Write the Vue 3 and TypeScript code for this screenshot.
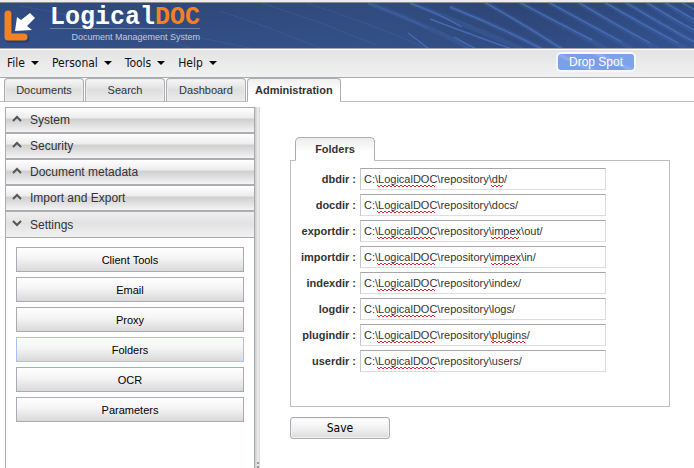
<script setup lang="ts">
import { reactive, ref } from 'vue'

interface SquiggleSpan {
  start: number
  width: number
}

interface FolderField {
  name: string
  path: string
  marks: SquiggleSpan[]
}

const menus: string[] = ['File', 'Personal', 'Tools', 'Help']
const tabs: string[] = ['Documents', 'Search', 'Dashboard', 'Administration']
const activeTab = ref('Administration')

const sections: string[] = ['System', 'Security', 'Document metadata', 'Import and Export', 'Settings']
const openSection = ref('Settings')

const settings: string[] = ['Client Tools', 'Email', 'Proxy', 'Folders', 'OCR', 'Parameters']
const activeSetting = ref('Folders')

const product: SquiggleSpan = { start: 17, width: 58 }

const fields = reactive<FolderField[]>([
  { name: 'dbdir', path: 'C:\\LogicalDOC\\repository\\db/', marks: [product, { start: 131, width: 12 }] },
  { name: 'docdir', path: 'C:\\LogicalDOC\\repository\\docs/', marks: [product] },
  { name: 'exportdir', path: 'C:\\LogicalDOC\\repository\\impex\\out/', marks: [product, { start: 131, width: 28 }] },
  { name: 'importdir', path: 'C:\\LogicalDOC\\repository\\impex\\in/', marks: [product, { start: 131, width: 28 }] },
  { name: 'indexdir', path: 'C:\\LogicalDOC\\repository\\index/', marks: [product] },
  { name: 'logdir', path: 'C:\\LogicalDOC\\repository\\logs/', marks: [product] },
  { name: 'plugindir', path: 'C:\\LogicalDOC\\repository\\plugins/', marks: [product, { start: 131, width: 34 }] },
  { name: 'userdir', path: 'C:\\LogicalDOC\\repository\\users/', marks: [product] },
])

// Zigzag under a misspelled word
function squiggle(mark: SquiggleSpan): string {
  let d = `M${mark.start} 1`
  for (let x = 2, low = true; x <= mark.width; x += 2, low = !low) {
    d += `L${mark.start + x} ${low ? 3 : 1}`
  }
  return d
}
</script>

<template>
  <div class="page">
    <header class="banner">
      <svg class="rays" viewBox="0 0 694 45" preserveAspectRatio="xMaxYMin slice" aria-hidden="true">
        <defs>
          <linearGradient id="sky" x1="0" y1="0" x2="1" y2="0">
            <stop offset="0" stop-color="#2f4a80" />
            <stop offset="0.25" stop-color="#2f4878" />
            <stop offset="0.55" stop-color="#304b7c" />
            <stop offset="0.75" stop-color="#2d4474" />
            <stop offset="1" stop-color="#2f4c86" />
          </linearGradient>
          <linearGradient id="glow" x1="0" y1="0" x2="0" y2="1">
            <stop offset="0" stop-color="#3b5fa6" stop-opacity="0" />
            <stop offset="1" stop-color="#3b5fa6" stop-opacity="0.3" />
          </linearGradient>
        </defs>
        <rect width="694" height="45" fill="url(#sky)" />
        <rect width="694" height="45" fill="url(#glow)" />
        <g fill="none" stroke="#4a72bd">
          <g stroke-width="1" opacity="0.3">
            <path d="M20 3Q120 20 190 45M100 18Q180 30 250 45M220 8Q270 24 320 45M262 0Q320 18 376 42M306 0Q370 20 426 45" />
          </g>
          <g stroke-width="5" opacity="0.22">
            <path d="M368 0Q424 21 470 45M410 0Q462 20 522 46M450 4Q500 24 542 46M484 -1Q522 20 562 46M519 -1Q560 21 606 46M548 -1Q590 22 632 46M578 -1Q616 22 658 46M604 -1Q642 21 686 46M625 -1Q666 24 706 46M646 -1Q676 20 706 34M664 -1L700 22" />
          </g>
          <g stroke-width="1.4" opacity="0.8">
            <path d="M368 0Q390 8 428 25" opacity="0.5" />
            <path d="M410 0Q440 11 462 24M408 30L428 45M450 4Q500 24 542 46M430 16Q480 35 512 46M454 34L476 46M484 -1Q522 20 562 46M519 -1Q560 21 592 37M548 -1Q590 22 622 39M578 -1Q616 22 650 40M604 -1Q642 21 678 40M625 -1Q666 24 700 42M646 -1Q676 18 700 30M664 -1L700 20M681 -1L700 10" />
          </g>
        </g>
      </svg>
      <svg class="mark" viewBox="0 0 34 34" aria-hidden="true">
        <path d="M4 5V28H21" transform="translate(1 1)" fill="none" stroke="#1f2f52" stroke-width="7" stroke-linecap="round" stroke-linejoin="round" opacity="0.5" />
        <path d="M4 4V27H20" fill="none" stroke="#f58220" stroke-width="7" stroke-linecap="round" stroke-linejoin="round" />
        <path d="M13 7L17 10L26 3L31 8L23 16L28 20L11 21Z" fill="#fff" />
      </svg>
      <div class="brand">
        <div class="name">Logical<span>DOC</span></div>
        <div class="slogan">Document Management System</div>
      </div>
    </header>

    <nav class="menubar">
      <button v-for="m in menus" :key="m" type="button" class="menu">
        {{ m }}
        <svg viewBox="0 0 8 4" aria-hidden="true"><path d="M0 0H8L4 4Z" /></svg>
      </button>
      <button type="button" class="drop">Drop Spot</button>
    </nav>

    <nav class="tabs">
      <button
        v-for="t in tabs"
        :key="t"
        type="button"
        class="tab"
        :class="{ active: t === activeTab }"
        @click="activeTab = t"
      >{{ t }}</button>
    </nav>

    <div class="workspace">
      <aside class="sidebar">
        <button
          v-for="s in sections"
          :key="s"
          type="button"
          class="section"
          :class="{ open: s === openSection }"
          @click="openSection = s"
        >
          <svg viewBox="0 0 10 7" aria-hidden="true">
            <path :d="s === openSection ? 'M1 1L5 5L9 1' : 'M1 6L5 2L9 6'" />
          </svg>
          {{ s }}
        </button>
        <div class="choices">
          <button
            v-for="c in settings"
            :key="c"
            type="button"
            class="choice"
            :class="{ active: c === activeSetting }"
            @click="activeSetting = c"
          >{{ c }}</button>
        </div>
      </aside>
      <div class="splitter"><i></i><i></i></div>

      <main class="content">
        <button type="button" class="panel-tab">Folders</button>
        <form id="folders" class="panel" @submit.prevent>
          <div v-for="f in fields" :key="f.name" class="row">
            <label :for="f.name">{{ f.name }} :</label>
            <div class="box">
              <input :id="f.name" v-model="f.path" type="text" spellcheck="false" />
              <svg class="wave" aria-hidden="true">
                <path v-for="(k, i) in f.marks" :key="i" :d="squiggle(k)" />
              </svg>
            </div>
          </div>
        </form>
        <button type="submit" form="folders" class="save">Save</button>
      </main>
    </div>
  </div>
</template>

<style>
body {
  margin: 0;
  background: #fff;
}
</style>

<style scoped>
.page {
  display: flex;
  flex-direction: column;
  height: 100vh;
  overflow: hidden;
  box-sizing: border-box;
  border-top: 2px solid #ececec;
  font-family: "Liberation Sans", Arial, sans-serif;
  font-size: 11px;
  color: #333;
}
button {
  margin: 0;
  padding: 0;
  box-sizing: border-box;
  font: inherit;
  color: inherit;
}
.banner {
  position: relative;
  flex: none;
  display: flex;
  height: 45px;
  background: #2f4a7d;
  border-top: 1px solid #8d8d8d;
  border-bottom: 1px solid #a3a5ac;
}
.rays {
  position: absolute;
  inset: 0;
  width: 100%;
  height: 100%;
}
.mark {
  position: relative;
  width: 34px;
  height: 34px;
  margin: 7px 0 0 4px;
}
.brand {
  position: relative;
  margin: 5px 0 0 12px;
  text-align: right;
}
.name {
  font: bold 25px/20px "Liberation Mono", monospace;
  color: #fff;
  border-bottom: 1px solid #6e7f9f;
}
.name span {
  color: #f58220;
}
.slogan {
  font-size: 9px;
  line-height: 16px;
  color: #c3cbdc;
}
.menubar {
  flex: none;
  display: flex;
  align-items: flex-start;
  height: 27px;
  padding-left: 7px;
  background: linear-gradient(#e3e3e3, #f1f1f1);
  border-top: 1px solid #fff;
  border-bottom: 1px solid #a7abb4;
}
.menu {
  display: flex;
  align-items: center;
  gap: 6px;
  height: 26px;
  margin-right: 13px;
  border: 0;
  background: none;
  color: #111;
  font: 12px "DejaVu Sans Condensed", Tahoma, sans-serif;
}
.menu svg {
  width: 8px;
  height: 4px;
}
.drop {
  width: 80px;
  height: 20px;
  margin: 2px 58px 0 auto;
  border: 2px solid #f5f8ff;
  border-radius: 5px;
  background: linear-gradient(25deg, #7aa0e6 0 25%, #8fb0ef 30%, #7b9fe6 38% 60%, #91b2f0 66%, #7ca2e8 74%);
  color: #fff;
  font-size: 12px;
  line-height: 16px;
}
.tabs {
  flex: none;
  display: flex;
  gap: 1px;
  height: 24px;
  padding-left: 4px;
  box-sizing: border-box;
  box-shadow: inset 0 -1px #bcbec2;
}
.tab {
  width: 80px;
  height: 24px;
  border: 1px solid #aaacb0;
  border-bottom-color: #bcbec2;
  border-radius: 4px 4px 0 0;
  background: linear-gradient(#f8f8f8, #dedede 50%, #ececec);
  box-shadow: inset 0 0 0 1px #eee;
}
.tab.active {
  width: auto;
  padding: 0 7px;
  border-bottom-color: #fff;
  background: linear-gradient(#efefef, #fff 60%);
  box-shadow: none;
  font-weight: bold;
}
.workspace {
  flex: 1;
  display: flex;
  min-height: 0;
  padding: 5px 0 0 5px;
}
.sidebar {
  flex: none;
  width: 250px;
  box-sizing: border-box;
  border: 1px solid #a7abb4;
  border-bottom: 0;
}
.section {
  display: flex;
  align-items: center;
  gap: 8px;
  width: 100%;
  height: 26px;
  padding-left: 6px;
  border: 0;
  border-bottom: 2px solid #abadb1;
  background: linear-gradient(#fff, #ececec 42%, #d0cece 46%, #f4f4f4);
  font-size: 12px;
}
.section.open {
  border-bottom: 1px solid #a7abb4;
  background: linear-gradient(#efefef, #e2e2e2 45%, #f1f1f1);
}
.section svg {
  width: 10px;
  height: 7px;
  margin-top: -3px;
  fill: none;
  stroke: #555;
  stroke-width: 2;
}
.choices {
  display: flex;
  flex-direction: column;
  gap: 5px;
  padding: 9px 10px;
}
.choice {
  height: 25px;
  border: 1px solid #a7abb4;
  background: linear-gradient(#fff, #f4f4f4 45%, #d9d9d9);
  color: #000;
}
.choice.active {
  border-color: #a3c4f5;
}
.splitter {
  flex: none;
  display: flex;
  flex-direction: column;
  align-items: center;
  justify-content: flex-end;
  gap: 2px;
  width: 5px;
  background: linear-gradient(90deg, #c6c8cc, #eee 60%, #d6d6d6);
}
.splitter i {
  flex: none;
  width: 2px;
  height: 2px;
  background: #999;
}
.content {
  flex: 1;
  min-width: 0;
  padding: 30px 24px 0 30px;
}
.panel-tab {
  position: relative;
  display: block;
  width: 80px;
  height: 24px;
  margin: 0 0 -1px 5px;
  border: 1px solid #abadb1;
  border-bottom-color: #fff;
  border-radius: 5px 5px 0 0;
  background: linear-gradient(#ececec, #fff 65%);
  font-weight: bold;
}
.panel {
  display: flex;
  flex-direction: column;
  gap: 4px;
  padding: 7px 63px 34px 4px;
  border: 1px solid #bcbfc3;
}
.row {
  display: flex;
  align-items: center;
}
.row label {
  flex: none;
  width: 61px;
  padding-right: 4px;
  text-align: right;
  font-weight: bold;
  white-space: nowrap;
}
.box {
  position: relative;
  flex: 1;
  display: flex;
}
.box input {
  width: 100%;
  height: 22px;
  box-sizing: border-box;
  padding: 0 3px;
  border: 1px solid #dcdce2;
  border-top-color: #a7a6aa;
  border-left-color: #c5c7d0;
  background: #fff;
  color: #333;
  font: inherit;
}
.wave {
  position: absolute;
  left: 0;
  bottom: 2px;
  width: 100%;
  height: 4px;
  pointer-events: none;
  fill: none;
  stroke: #e8232a;
}
.save {
  width: 100px;
  height: 22px;
  margin-top: 10px;
  border: 1px solid #a7abb4;
  border-radius: 3px;
  background: linear-gradient(#fff, #f3f3f3 45%, #dcdcdc);
  box-shadow: inset 0 0 0 1px #f4f4f4;
  color: #000;
  font: 12px "DejaVu Sans Condensed", Tahoma, sans-serif;
}
</style>
